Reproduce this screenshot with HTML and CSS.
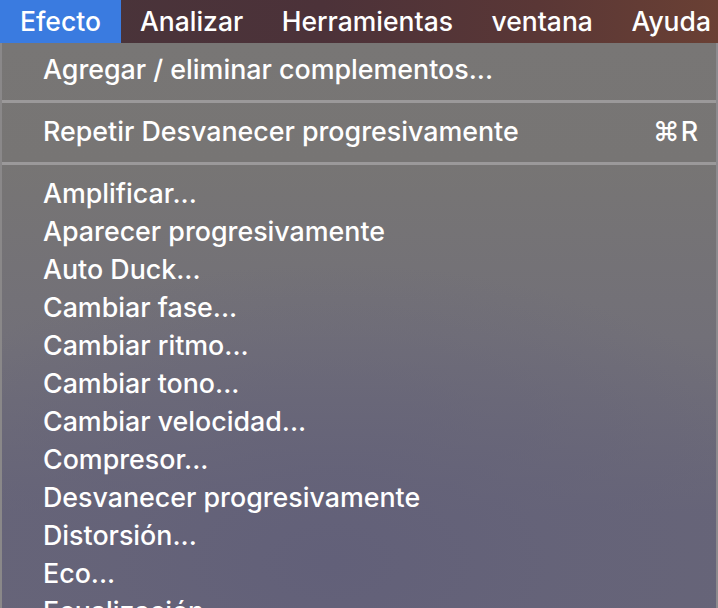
FILE: index.html
```html
<!DOCTYPE html>
<html lang="es">
<head>
<meta charset="utf-8">
<title>Efecto</title>
<link rel="stylesheet" href="styles.css">
</head>
<body>
<div class="screen">
  <div class="menubar">
    <div class="mb-item active">Efecto</div>
    <div class="mb-item">Analizar</div>
    <div class="mb-item">Herramientas</div>
    <div class="mb-item">ventana</div>
    <div class="mb-item">Ayuda</div>
  </div>
  <div class="menu">
    <div class="item first">Agregar / eliminar complementos...</div>
    <div class="sep"></div>
    <div class="item"><span>Repetir Desvanecer progresivamente</span><span class="key">⌘R</span></div>
    <div class="sep"></div>
    <div class="item">Amplificar...</div>
    <div class="item">Aparecer progresivamente</div>
    <div class="item">Auto Duck...</div>
    <div class="item">Cambiar fase...</div>
    <div class="item">Cambiar ritmo...</div>
    <div class="item">Cambiar tono...</div>
    <div class="item">Cambiar velocidad...</div>
    <div class="item">Compresor...</div>
    <div class="item">Desvanecer progresivamente</div>
    <div class="item">Distorsión...</div>
    <div class="item">Eco...</div>
    <div class="item">Ecualización...</div>
  </div>
</div>
</body>
</html>
```
FILE: styles.css
```css
html, body {
  margin: 0;
  padding: 0;
}
body {
  width: 718px;
  height: 608px;
  overflow: hidden;
  font-family: Inter, "Noto Sans", "Liberation Sans", sans-serif;
  color: #ffffff;
}
.screen {
  width: 718px;
  height: 608px;
  display: flex;
  flex-direction: column;
  overflow: hidden;
}
.menubar {
  height: 43px;
  flex: none;
  display: flex;
  align-items: stretch;
  background: linear-gradient(90deg, #48343a 0%, #4c3239 45%, #5a3736 75%, #6a4034 100%);
}
.mb-item {
  font-size: 26.5px;
  font-weight: 500;
  line-height: 43px;
  padding: 0 19.5px 0 19px;
}
.mb-item.active {
  background: #3a7be0;
  padding: 0 20px;
}
.menu {
  flex: 1;
  padding-top: 7px;
  border-left: 2px solid #8a8889;
  border-right: 2px solid #8c8a8e;
  width: 714px;
  background:
    radial-gradient(ellipse 520px 300px at 330px 520px, #626079 0%, rgba(100,98,121,0.6) 45%, rgba(103,101,120,0) 100%),
    linear-gradient(180deg, #787675 0%, #777574 20%, #727078 50%, #676578 80%, #676578 100%);
}
.item {
  height: 38px;
  line-height: 38px;
  font-size: 26.8px;
  font-weight: 500;
  padding: 0 17px 0 41px;
  display: flex;
  justify-content: space-between;
  white-space: nowrap;
}
.sep {
  height: 3px;
  background: #9b999a;
  margin: 12px 0 9px;
}
.key {
  letter-spacing: 1px;
}
```
